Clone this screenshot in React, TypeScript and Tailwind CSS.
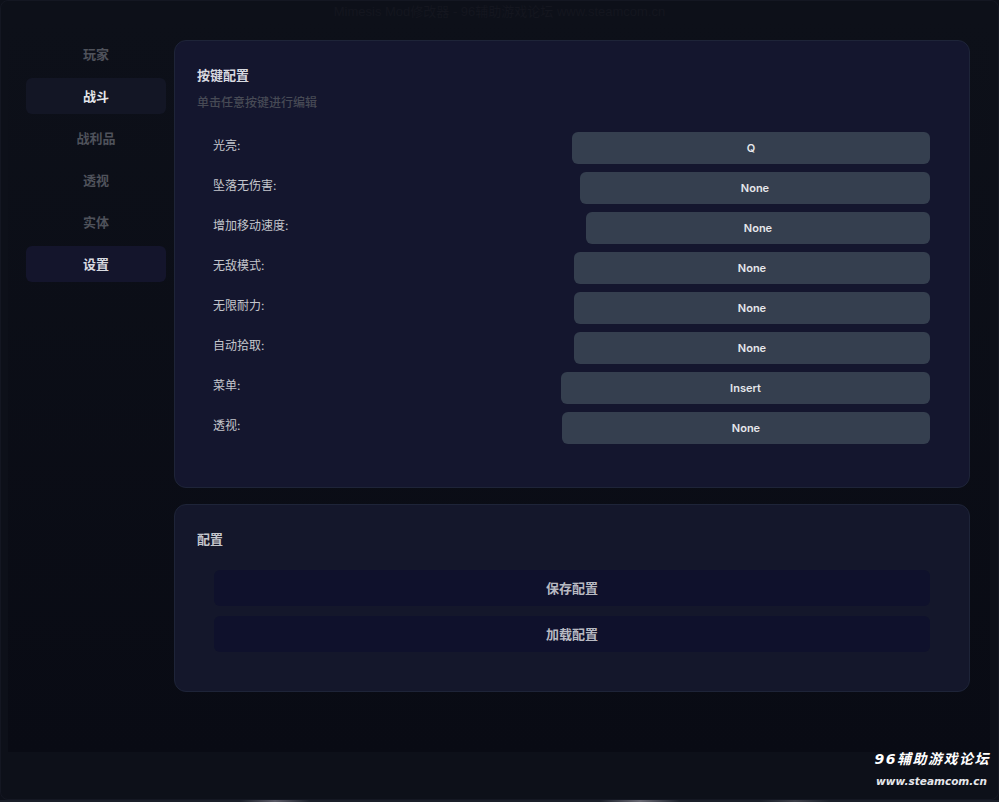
const font = { fontFamily: 'Inter, "Noto Sans CJK SC", sans-serif' };
const titleFont = { fontFamily: '"Liberation Sans", "Noto Sans CJK SC", sans-serif' };
const markFont = { fontFamily: '"DejaVu Sans", "Noto Sans CJK SC", sans-serif' };

const navItems = [
  { label: '玩家', state: 'idle' },
  { label: '战斗', state: 'hover' },
  { label: '战利品', state: 'idle' },
  { label: '透视', state: 'idle' },
  { label: '实体', state: 'idle' },
  { label: '设置', state: 'active' },
];

const keybinds = [
  { label: '光亮:', value: 'Q', width: 'w-[358px]' },
  { label: '坠落无伤害:', value: 'None', width: 'w-[350px]' },
  { label: '增加移动速度:', value: 'None', width: 'w-[344px]' },
  { label: '无敌模式:', value: 'None', width: 'w-[356px]' },
  { label: '无限耐力:', value: 'None', width: 'w-[356px]' },
  { label: '自动拾取:', value: 'None', width: 'w-[356px]' },
  { label: '菜单:', value: 'Insert', width: 'w-[369px]' },
  { label: '透视:', value: 'None', width: 'w-[368px]' },
];

function NavButton({ label, state }: { label: string; state: string }) {
  const styles =
    state === 'active'
      ? 'bg-[#14152c] text-[#d8dae0]'
      : state === 'hover'
        ? 'bg-[#131625] text-[#e5e7eb]'
        : 'text-[#4f525b]';
  return (
    <div className={`h-9 pt-[2px] rounded-md flex items-center justify-center text-[13px] font-semibold ${styles}`}>
      {label}
    </div>
  );
}

function KeybindRow({ label, value, width }: { label: string; value: string; width: string }) {
  return (
    <div className="h-8 flex justify-between">
      <span className="text-[12px] leading-[27px] text-[#c4c6cc]">{label}</span>
      <button className={`${width} h-8 rounded-md bg-[#353f4f] text-[11px] font-semibold text-[#e5e7eb]`}>{value}</button>
    </div>
  );
}

export default function App() {
  return (
    <div style={font} className="relative w-[999px] h-[802px] bg-[#0d1019] overflow-hidden flex flex-col">
      {/* Title bar */}
      <div style={titleFont} className="h-[20px] mt-px text-center text-[13px] leading-[22px] text-[#14161f]">
        Mimesis Mod修改器 - 96辅助游戏论坛 www.steamcom.cn
      </div>

      <div className="h-[731px] ml-2 mr-[9px] flex bg-linear-to-b from-[#0d1019] to-[#090b14]">
        {/* Sidebar */}
        <nav className="w-[158px] shrink-0 pl-[18px] pt-[15px] flex flex-col gap-[6px]">
          {navItems.map((item) => (
            <NavButton key={item.label} label={item.label} state={item.state} />
          ))}
        </nav>

        {/* Content */}
        <main className="w-[796px] ml-[8px] pt-[19px] flex flex-col gap-4">
          <section className="h-[448px] rounded-xl border border-[#1e2438] bg-[#14162e] pl-[22px] pr-[39px] pt-[26px]">
            <h2 className="text-[13px] leading-4 font-semibold text-[#d8dae0]">按键配置</h2>
            <p className="mt-[12px] text-[12px] leading-4 font-medium text-[#474a55]">单击任意按键进行编辑</p>
            <div className="mt-[21px] pl-4 flex flex-col gap-2">
              {keybinds.map((row) => (
                <KeybindRow key={row.label} {...row} />
              ))}
            </div>
          </section>

          <section className="h-[188px] rounded-xl border border-[#1e2438] bg-[#14172b] pl-[22px] pr-[39px] pt-[26px]">
            <h2 className="text-[13px] leading-4 font-semibold text-[#c4c6cc]">配置</h2>
            <div className="mt-[23px] pl-[17px] flex flex-col gap-[10px]">
              <button className="h-9 pt-[2px] rounded-md bg-[#0f112c] text-[13px] font-semibold text-[#b8bac2]">保存配置</button>
              <button className="h-9 pt-[2px] rounded-md bg-[#0f112c] text-[13px] font-semibold text-[#b8bac2]">加载配置</button>
            </div>
          </section>
        </main>
      </div>

      {/* Watermark */}
      <div className="absolute right-[9px] top-[751px] flex flex-col items-end text-white italic font-bold" style={markFont}>
        <span className="text-[14px] leading-4 tracking-[1.5px]">96辅助游戏论坛</span>
        <span className="mt-[6px] mr-[3px] text-[10.5px] leading-4 text-[#e5e7eb]">www.steamcom.cn</span>
      </div>

      {/* Window frame */}
      <div className="absolute inset-x-0 top-0 bottom-[2px] rounded-lg border border-[#141722] pointer-events-none" />

      {/* Reflection along the bottom edge */}
      <div className="absolute inset-x-0 bottom-0 h-[2px] bg-[#1a1f29]">
        <div className="absolute left-[240px] w-[70px] h-full bg-linear-to-r from-transparent via-[#5a5a66] to-transparent" />
        <div className="absolute left-[600px] w-[80px] h-full bg-linear-to-r from-transparent via-[#6a6a74] to-transparent" />
        <div className="absolute left-[760px] w-[70px] h-full bg-linear-to-r from-transparent via-[#3c3e48] to-transparent" />
      </div>
    </div>
  );
}
